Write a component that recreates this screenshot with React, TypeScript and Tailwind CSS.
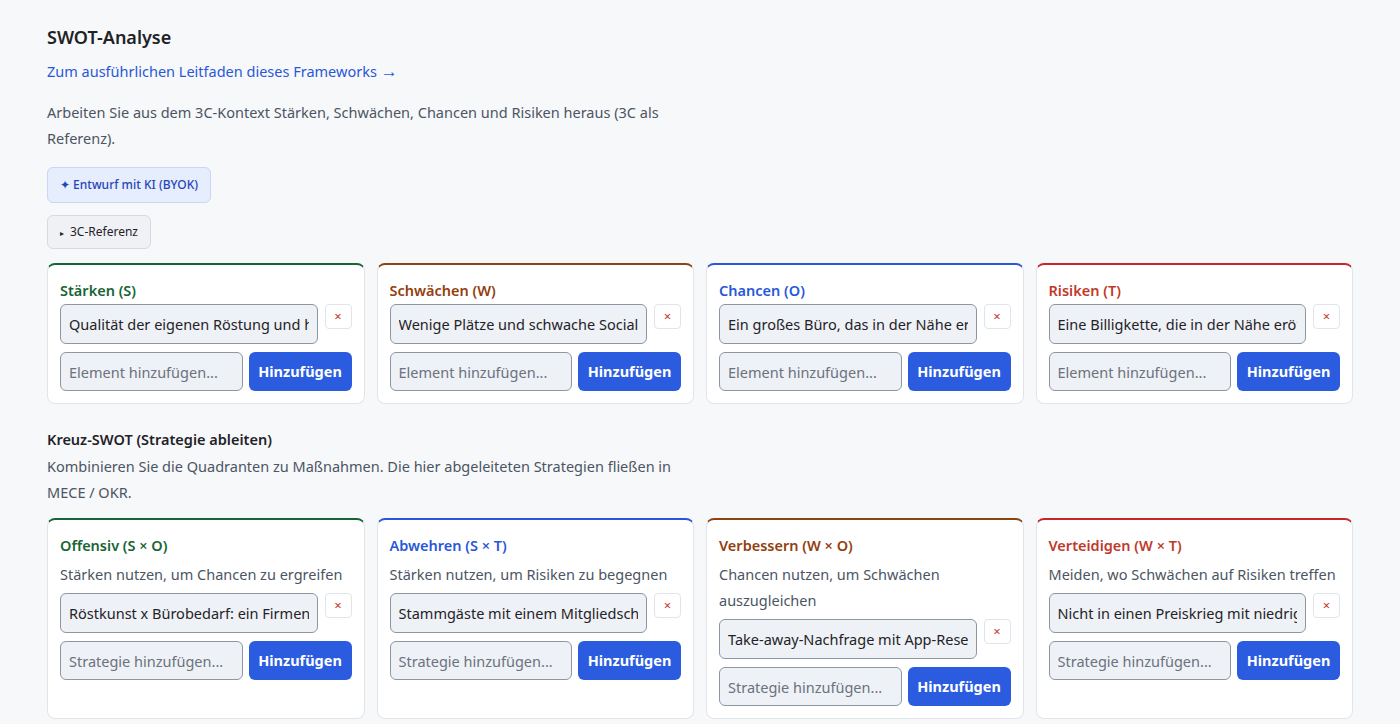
import React from "react"

type Quadrant = {
  title: string
  desc?: string
  color: string
  border: string
  items: string[]
  placeholder: string
}

const swot: Quadrant[] = [
  {
    title: "Stärken (S)",
    color: "text-[#166534]",
    border: "border-t-[#166534]",
    items: ["Qualität der eigenen Röstung und hohe Stammkundenquote"],
    placeholder: "Element hinzufügen...",
  },
  {
    title: "Schwächen (W)",
    color: "text-[#92400e]",
    border: "border-t-[#8a4512]",
    items: ["Wenige Plätze und schwache Social-Media-Präsenz"],
    placeholder: "Element hinzufügen...",
  },
  {
    title: "Chancen (O)",
    color: "text-[#2957d9]",
    border: "border-t-[#2957d9]",
    items: ["Ein großes Büro, das in der Nähe eröffnet wird"],
    placeholder: "Element hinzufügen...",
  },
  {
    title: "Risiken (T)",
    color: "text-[#c0392b]",
    border: "border-t-[#c62828]",
    items: ["Eine Billigkette, die in der Nähe eröffnet"],
    placeholder: "Element hinzufügen...",
  },
]

const cross: Quadrant[] = [
  {
    title: "Offensiv (S × O)",
    desc: "Stärken nutzen, um Chancen zu ergreifen",
    color: "text-[#166534]",
    border: "border-t-[#166534]",
    items: ["Röstkunst x Bürobedarf: ein Firmen-Abo anbieten"],
    placeholder: "Strategie hinzufügen...",
  },
  {
    title: "Abwehren (S × T)",
    desc: "Stärken nutzen, um Risiken zu begegnen",
    color: "text-[#2957d9]",
    border: "border-t-[#2957d9]",
    items: ["Stammgäste mit einem Mitgliedschaftsprogramm binden"],
    placeholder: "Strategie hinzufügen...",
  },
  {
    title: "Verbessern (W × O)",
    desc: "Chancen nutzen, um Schwächen auszugleichen",
    color: "text-[#92400e]",
    border: "border-t-[#8a4512]",
    items: ["Take-away-Nachfrage mit App-Reservierung abdecken"],
    placeholder: "Strategie hinzufügen...",
  },
  {
    title: "Verteidigen (W × T)",
    desc: "Meiden, wo Schwächen auf Risiken treffen",
    color: "text-[#c0392b]",
    border: "border-t-[#c62828]",
    items: ["Nicht in einen Preiskrieg mit niedrigen Preisen eintreten"],
    placeholder: "Strategie hinzufügen...",
  },
]

function Card({ q }: { q: Quadrant }) {
  return (
    <div className={`flex flex-col rounded-lg border border-[#e1e4ea] border-t-2 ${q.border} bg-white px-3 pb-3 pt-[15px]`}>
      <div className={`text-[14.5px] font-semibold leading-5 ${q.color}`}>{q.title}</div>
      {q.desc && <div className="mt-[6px] text-[14.5px] leading-[26px] text-[#4b5563]">{q.desc}</div>}
      <div className={q.desc ? "mt-[6px] flex flex-col gap-2" : "mt-1 flex flex-col gap-2"}>
        {q.items.map((it, i) => (
          <div key={i} className="flex items-start gap-[7px]">
            <input
              readOnly
              value={it}
              className="h-10 min-w-0 flex-1 rounded-md border border-[#8e95a3] bg-[#eef1f5] px-2 text-[14.5px] text-[#1f2328] outline-none"
            />
            <button className="flex h-[25px] w-[27px] shrink-0 items-center justify-center rounded border border-[#e1e4ea] bg-white text-[13px] leading-none text-[#c0392b]">
              ×
            </button>
          </div>
        ))}
        <div className="flex gap-[6px]">
          <input
            placeholder={q.placeholder}
            className="h-[39px] min-w-0 flex-1 rounded-md border border-[#8e95a3] bg-[#eef1f5] px-2 text-[14.5px] text-[#1f2328] outline-none placeholder:text-[#6b7280]"
          />
          <button className="h-[39px] w-[103px] shrink-0 rounded-md bg-[#2b5ce0] text-[14.5px] font-bold text-white">
            Hinzufügen
          </button>
        </div>
      </div>
    </div>
  )
}

export default function App() {
  return (
    <div className="min-h-screen bg-[#f7f8fa] px-[47px] pt-[25px] pb-6 text-[#1f2328]" style={{ fontFamily: '"Noto Sans", "Open Sans", sans-serif' }}>
      <h1 className="text-[18px] font-semibold leading-6">SWOT-Analyse</h1>
      <a className="mt-3 block text-[14.5px] leading-5 text-[#2957d9]">
        Zum ausführlichen Leitfaden dieses Frameworks <span className="text-[17px] leading-none">→</span>
      </a>
      <p className="mt-[18px] max-w-[640px] text-[14.5px] leading-[26px] text-[#4b5563]">
        Arbeiten Sie aus dem 3C-Kontext Stärken, Schwächen, Chancen und Risiken heraus (3C als Referenz).
      </p>
      <div className="mt-4 flex flex-col items-start gap-3">
        <button className="h-9 rounded-md border border-[#c9d6f5] bg-[#e6edfd] px-3 text-[12px] font-medium text-[#2546b8]">
          ✦ Entwurf mit KI (BYOK)
        </button>
        <button className="h-[34px] rounded-md border border-[#d5d9e0] bg-[#eff1f4] px-3 text-[12px] text-[#1f2328]">
          <span className="mr-[6px] text-[8px] align-middle">▸</span>3C-Referenz
        </button>
      </div>
      <div className="mt-[14px] grid grid-cols-4 gap-3">
        {swot.map((q) => (
          <Card key={q.title} q={q} />
        ))}
      </div>
      <h2 className="mt-[25px] text-[14.5px] font-semibold leading-5">Kreuz-SWOT (Strategie ableiten)</h2>
      <p className="mt-1 max-w-[650px] text-[14.5px] leading-[26px] text-[#4b5563]">
        Kombinieren Sie die Quadranten zu Maßnahmen. Die hier abgeleiteten Strategien fließen in MECE / OKR.
      </p>
      <div className="mt-[13px] grid grid-cols-4 gap-3">
        {cross.map((q) => (
          <Card key={q.title} q={q} />
        ))}
      </div>
    </div>
  )
}
